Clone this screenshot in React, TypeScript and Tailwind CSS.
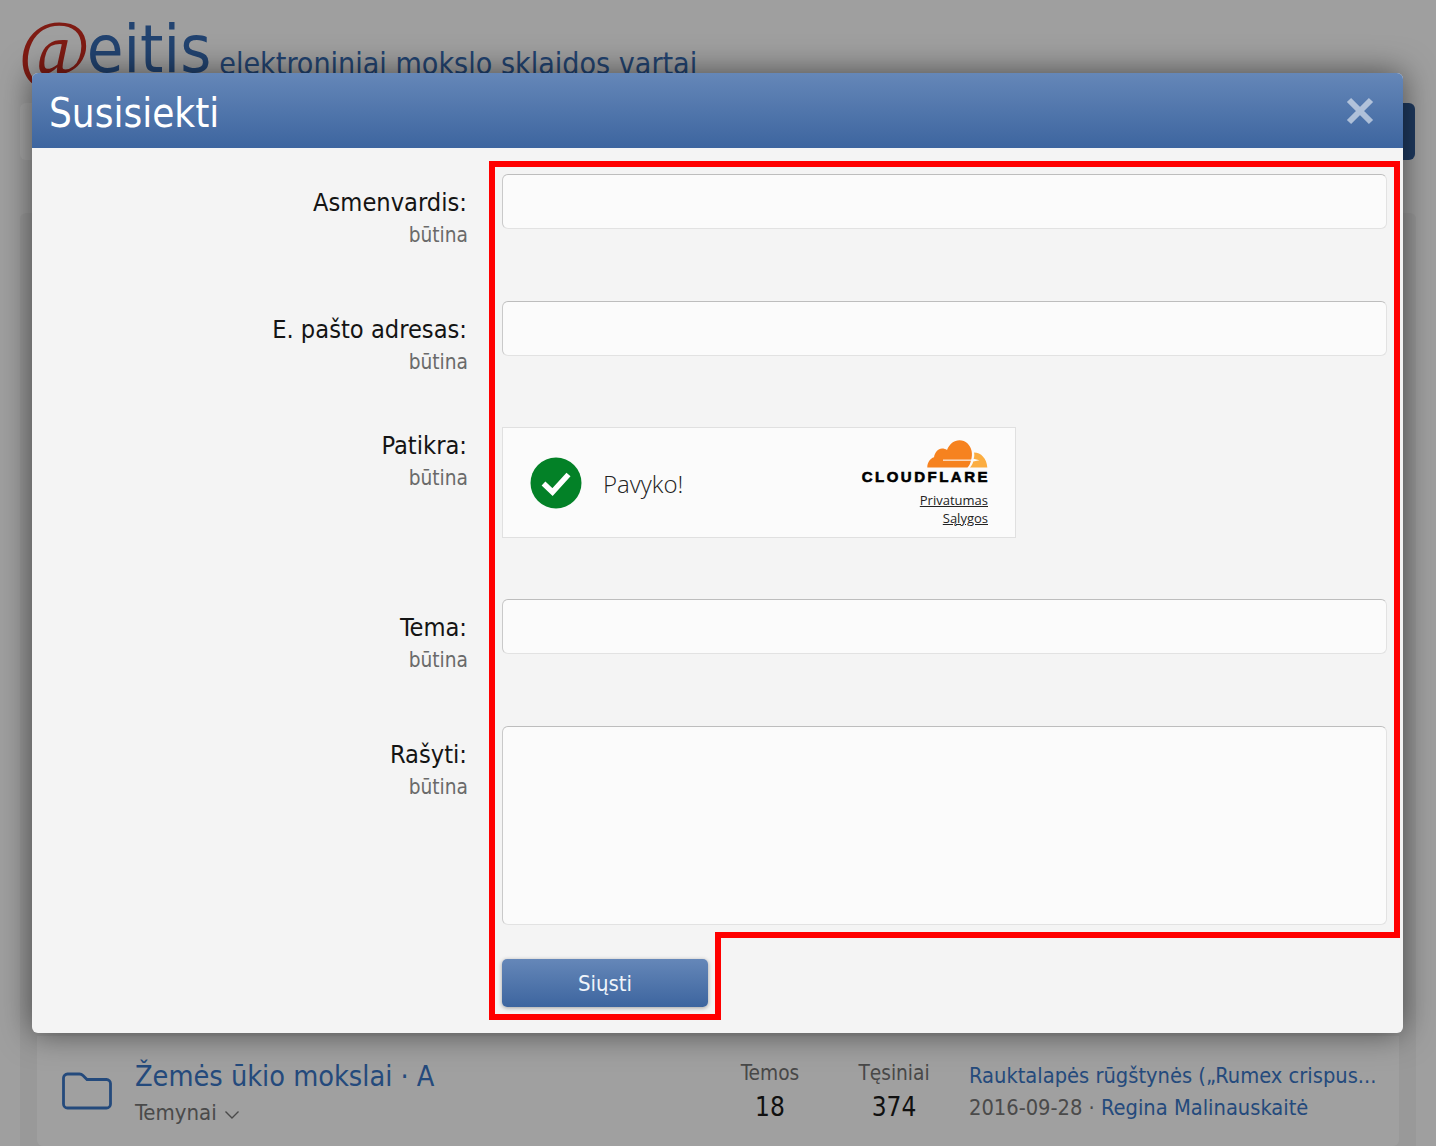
const fontStack = "font-['DejaVu_Sans_Condensed','DejaVu_Sans',sans-serif]";

const FormRow = ({ label, height, labelTop = 'pt-[12px]', children }: { label: string; height: string; labelTop?: string; children: React.ReactNode }) => {
  return (
    <div className={`flex gap-[34px] ${height}`}>
      <div className={`w-[436px] shrink-0 text-right ${labelTop}`}>
        <div className="text-[25.2px] leading-[34px] pr-[1px] text-[#141414]">{label}</div>
        <div className="text-[20.7px] leading-[28px] mt-[1px] text-[#6a6a6a]">būtina</div>
      </div>
      <div className="flex-1">{children}</div>
    </div>
  );
};

const TextField = () => {
  return <div className="h-[55px] rounded-[6px] bg-[#fbfbfb] border border-[#e2e2e2] border-t-[#bdbdbd] border-l-[#c9c9c9]"></div>;
};

const CloudLogo = () => {
  return (
    <svg width="61" height="28" viewBox="0 0 61 28" className="block">
      <path d="M0.3 27.5C0.3 22.5 3 18.5 7 17.2C8 12 11 8.5 15 8.5C17 8.5 18.7 9 20 10C22.5 4 27 0.3 32.5 0.3C38.5 0.3 43.5 5 44.6 11C45.2 14 45 17 44 20.5C43.5 23 42.5 25.5 40.5 27.5Z" fill="#f6821f" />
      <path d="M16 19.6H45.5V20.7H16Z" fill="#fbfbfb" />
      <path d="M47 12.5C54 12.5 59.8 18.5 60.3 27.5H43C44.8 25.5 45.8 23.5 46.2 21.4L52.5 20.2L46.6 18.8C47.4 17 47.5 14.5 47 12.5Z" fill="#fbad41" />
    </svg>
  );
};

const Captcha = () => {
  return (
    <div className="w-[514px] h-[111px] border border-[#e0e0e0] bg-[#fbfbfb] flex items-center pl-[27px] pr-[27px] font-['Open_Sans',sans-serif]">
      <svg width="52" height="52" viewBox="0 0 52 52" className="shrink-0">
        <circle cx="26" cy="26" r="25.5" fill="#038127" />
        <path d="M13.5 26.5L22.5 35L38.5 17.5" fill="none" stroke="#fff" strokeWidth="5.5" />
      </svg>
      <span className="ml-[21px] text-[24px] font-light leading-none pt-[2px] text-[#232323] flex-1">Pavyko!</span>
      <div className="flex flex-col items-end pt-[2px]">
        <CloudLogo />
        <div className="font-['Liberation_Sans',sans-serif] font-black text-[15px] leading-[18px] tracking-[2.5px] mr-[-2px] text-black [-webkit-text-stroke:0.6px_black]">CLOUDFLARE</div>
        <a className="text-[13px] leading-[18px] mt-[5px] underline text-[#232323]">Privatumas</a>
        <a className="text-[13px] leading-[18px] underline text-[#232323]">Sąlygos</a>
      </div>
    </div>
  );
};

const ForumRow = () => {
  return (
    <div className="flex items-start pl-[25px] pt-[20px]">
      <svg width="50" height="38" viewBox="0 0 50 38" className="mt-[16px] shrink-0">
        <path d="M1.5 6A4 4 0 0 1 5.5 2H17.5C19 2 20 2.6 21 3.6L25 7.5H44.5A4 4 0 0 1 48.5 11.5V32A4 4 0 0 1 44.5 36H5.5A4 4 0 0 1 1.5 32Z" fill="none" stroke="#3872bf" strokeWidth="2.8" />
      </svg>
      <div className="ml-[23px] w-[570px]">
        <div className="text-[28.6px] leading-[40px] font-['DejaVu_Sans_Condensed',sans-serif] text-[#3872bf]">Žemės ūkio mokslai · A</div>
        <div className="flex items-center mt-[1px] text-[22px] leading-[32px] text-[#727272]">
          Temynai
          <svg width="16" height="10" viewBox="0 0 16 10" className="ml-[7px] mt-[4px]">
            <path d="M1.5 1.5L8 8L14.5 1.5" fill="none" stroke="#727272" strokeWidth="1.4" />
          </svg>
        </div>
      </div>
      <div className="w-[124px] ml-[3px] text-center">
        <div className="text-[20.7px] leading-[28px] mt-[3px] text-[#6f6f6f]">Temos</div>
        <div className="text-[26px] leading-[34px] mt-[3px] text-[#1a1a1a]">18</div>
      </div>
      <div className="w-[124px] text-center">
        <div className="text-[20.7px] leading-[28px] mt-[3px] text-[#6f6f6f]">Tęsiniai</div>
        <div className="text-[26px] leading-[34px] mt-[3px] text-[#1a1a1a]">374</div>
      </div>
      <div className="ml-[13px] w-[410px] text-[21.7px] leading-[32px] mt-[4px] whitespace-nowrap">
        <div className="text-[#3872bf]">Rauktalapės rūgštynės („Rumex crispus...</div>
        <div className="text-[#727272]">2016-09-28 · <span className="text-[#3872bf]">Regina Malinauskaitė</span></div>
      </div>
    </div>
  );
};

const SelectionOutline = () => {
  return (
    <svg width="1436" height="1146" className="absolute inset-0 pointer-events-none">
      <path d="M492 164H1397V935H718V1017H492Z" fill="none" stroke="#ff0000" strokeWidth="6" />
    </svg>
  );
};

export default function App() {
  return (
    <div className={`relative w-[1436px] h-[1146px] overflow-hidden bg-[#f4f4f4] ${fontStack}`}>
      {/* page behind the dialog */}
      <header className="h-[103px] pl-[18px] flex items-start whitespace-nowrap">
        <span className="font-['Liberation_Serif',serif] italic text-[78px] leading-[100px] text-[#c32a1e] mt-[-2px]">@</span>
        <span className="font-['DejaVu_Sans_Condensed',sans-serif] text-[66.4px] leading-[100px] text-[#3568ad] ml-[-3px] mt-[-1px]">eitis</span>
        <span className="font-['DejaVu_Sans_Condensed',sans-serif] text-[30.1px] leading-[40px] text-[#3568ad] ml-[8px] mt-[44px]">elektroniniai mokslo sklaidos vartai</span>
      </header>
      <nav className="ml-[20px] mr-[21px] h-[57px] rounded-[6px] bg-[#fff] flex justify-end">
        <div className="w-[200px] rounded-r-[6px] bg-[#305a94]"></div>
      </nav>
      <main className="mx-[20px] mt-[53px] h-[1000px] rounded-[6px] bg-[#ebebeb] px-[17px]">
        <div className="h-[823px]"></div>
        <div className="h-[110px] rounded-b-[6px] bg-[#f6f6f6]">
          <ForumRow />
        </div>
      </main>

      {/* overlay and dialog */}
      <div className="absolute inset-0 bg-black/35"></div>
      <div className="absolute left-[32px] top-[73px] w-[1371px] h-[960px] rounded-[6px] bg-[#f4f4f4] shadow-[0_0_32px_rgba(0,0,0,0.55)] overflow-hidden">
        <div className="h-[75px] flex items-center justify-between pl-[17px] pr-[29px] bg-gradient-to-b from-[#6587b8] to-[#3d659f]">
          <h2 className="text-[40px] leading-none pt-[4px] text-white">Susisiekti</h2>
          <svg width="28" height="28" viewBox="0 0 28 28" className="mt-[1px]">
            <path d="M3 3L25 25M25 3L3 25" stroke="#ffffff" strokeOpacity="0.55" strokeWidth="6" />
          </svg>
        </div>
        <div className="pt-[26px] pr-[16px]">
          <FormRow label="Asmenvardis:" height="h-[127px]"><TextField /></FormRow>
          <FormRow label="E. pašto adresas:" height="h-[126px]"><TextField /></FormRow>
          <FormRow label="Patikra:" height="h-[172px]" labelTop="pt-[2px]"><Captcha /></FormRow>
          <FormRow label="Tema:" height="h-[127px]"><TextField /></FormRow>
          <FormRow label="Rašyti:" height="h-[233px]">
            <div className="h-[199px] rounded-[6px] bg-[#fbfbfb] border border-[#e2e2e2] border-t-[#bdbdbd] border-l-[#c9c9c9]"></div>
          </FormRow>
          <div className="pl-[470px]">
            <button className="w-[206px] h-[48px] rounded-[5px] bg-gradient-to-b from-[#6587b8] to-[#3d659f] text-[22px] text-[#f0f4fa] shadow-[0_1px_4px_rgba(0,0,0,0.35)]">Siųsti</button>
          </div>
        </div>
      </div>
      <SelectionOutline />
    </div>
  );
}
